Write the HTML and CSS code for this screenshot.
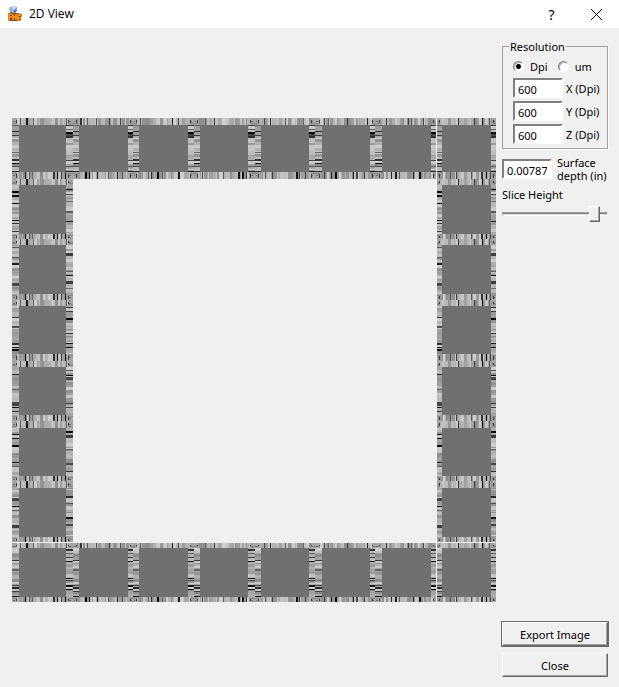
FILE: index.html
```html
<!DOCTYPE html>
<html lang="en">
<head>
<meta charset="utf-8">
<title>2D View</title>
<link rel="stylesheet" href="styles.css">
</head>
<body>
<header class="titlebar">
  <svg class="app-icon" viewBox="0 0 16 16" aria-hidden="true">
    <path d="M3 1l4-1 3 1v3L9 7H4L2 4z" fill="#8fb4e3"/>
    <path d="M5 1l3-1 1 2-3 2z" fill="#cfe2f8"/>
    <path d="M7 4l3-1-1 3-2 1z" fill="#4f78b8"/>
    <path d="M1 7l4-1 1 1h4l5 1v2l-1 1v3l-2 1H2l-1-1z" fill="#8a4a12"/>
    <path d="M2 15V8h3M2 11h3M6 8v6M9 8v6M6 11h3M11 15V9h4M11 12h3" fill="none" stroke="#ff9a1f" stroke-width="1.600"/>
  </svg>
  <h1 class="title">2D View</h1>
  <button class="caption-button" type="button" aria-label="Help">?</button>
  <button class="caption-button" type="button" aria-label="Close window">
    <svg class="cross" viewBox="0 0 11 11"><path d="M0 0l11 11M11 0L0 11" fill="none" stroke="#000"/></svg>
  </button>
</header>
<main class="content">
  <svg id="slice" class="slice" viewBox="0 0 484 484" shape-rendering="crispEdges" role="img" aria-label="Slice"></svg>
  <form class="panel">
    <fieldset class="group">
      <legend>Resolution</legend>
      <div class="units">
        <label><input type="radio" name="unit" checked>Dpi</label>
        <label><input type="radio" name="unit">um</label>
      </div>
      <label class="field"><input type="text" value="600">X (Dpi)</label>
      <label class="field"><input type="text" value="600">Y (Dpi)</label>
      <label class="field"><input type="text" value="600">Z (Dpi)</label>
    </fieldset>
    <label class="field depth"><input type="text" value="0.00787"><span>Surface depth (in)</span></label>
    <label class="slider">Slice Height<input type="range" min="0" max="100" value="92"></label>
    <div class="actions">
      <button class="push default" type="button">Export Image</button>
      <button class="push" type="button">Close</button>
    </div>
  </form>
</main>
<script src="slice.js"></script>
</body>
</html>
```
FILE: styles.css
```css
* { box-sizing: border-box; }
body {
  margin: 0;
  min-height: 100vh;
  display: flex;
  flex-direction: column;
  background: #f0f0f0;
  color: #000;
  font: 11px/13px "Noto Sans", "Open Sans", sans-serif;
}
button, input { font: inherit; color: inherit; }
.titlebar {
  display: flex;
  align-items: center;
  height: 28px;
  padding-left: 7px;
  background: #fff;
}
.app-icon { width: 16px; height: 16px; margin-right: 6px; }
.title { flex: 1; margin: 0; font: 12px/16px "Open Sans", sans-serif; }
.caption-button {
  display: grid;
  place-items: center;
  width: 45px;
  height: 28px;
  padding: 0;
  border: 0;
  background: none;
  font-size: 14px;
}
.cross { width: 11px; height: 11px; }
.content {
  flex: 1;
  display: grid;
  grid-template-columns: 1fr 106px;
  gap: 6px;
  padding: 12px 11px 10px 12px;
}
.slice { width: 100%; margin-top: 78px; }
.panel { display: flex; flex-direction: column; }
.group {
  display: flex;
  flex-direction: column;
  gap: 3px;
  min-width: 0;
  margin: 0;
  padding: 7px 0 4px 10px;
  border: 1px solid #a0a0a0;
  box-shadow: 1px 1px #fff;
}
.group legend { margin-left: -4px; padding: 0 1px; }
.units { display: flex; gap: 10px; margin-bottom: 2px; }
.units label { display: flex; align-items: center; gap: 6px; }
.units input {
  appearance: none;
  width: 11px;
  height: 11px;
  margin: 0;
  border: 1px solid;
  border-color: #808080 #fff #fff #808080;
  border-radius: 50%;
  background: #fff;
  box-shadow: inset 1px 1px #b0b0b0;
}
.units input:checked { background: radial-gradient(circle, #000 2px, #fff 3px); }
.field { display: flex; align-items: center; gap: 3px; white-space: nowrap; }
.field input {
  width: 50px;
  height: 20px;
  padding: 2px 3px 0;
  border: 2px solid;
  border-color: #808080 #fff #fff #808080;
  border-radius: 0;
  background: #fff;
}
.depth { gap: 5px; margin-top: 7px; white-space: normal; }
.slider { display: block; margin-top: 6px; }
.slider input {
  appearance: none;
  display: block;
  width: 100%;
  height: 16px;
  margin: 5px 0 0;
  background: none;
}
.slider input::-webkit-slider-runnable-track {
  height: 4px;
  border: 1px solid;
  border-color: #a0a0a0 #fff #fff #a0a0a0;
  background: linear-gradient(#808080 1px, #e3e3e3 1px);
}
.slider input::-webkit-slider-thumb {
  appearance: none;
  width: 11px;
  height: 16px;
  margin-top: -7px;
  border: 1px solid;
  border-color: #fff #696969 #696969 #fff;
  background: #f0f0f0;
  box-shadow: inset -1px -1px #a0a0a0;
}
.actions { display: flex; flex-direction: column; gap: 7px; margin-top: auto; }
.push {
  height: 24px;
  padding: 0;
  border: 1px solid;
  border-color: #fff #696969 #696969 #fff;
  border-radius: 0;
  background: #f0f0f0;
  box-shadow: inset -1px -1px #a0a0a0;
}
.push.default { outline: 1px solid #696969; }
```
FILE: slice.js
```js
// Draws the frame of tiles; every tile edge is a barcode-like strip of greys.
const svg = document.getElementById("slice");
const starts = [0, 61, 121, 182, 243, 303, 363, 425];
const ends = [61, 121, 182, 243, 303, 363, 424, 484];
const inner = [[7, 54], [67, 116], [127, 176], [188, 236], [249, 297], [310, 358], [370, 419], [430, 479]];

function rect(x, y, w, h, fill) {
  const r = document.createElementNS("http://www.w3.org/2000/svg", "rect");
  Object.entries({ x, y, width: w, height: h, fill }).forEach(([k, v]) => r.setAttribute(k, v));
  svg.append(r);
}
function grey(v) { return `rgb(${v},${v},${v})`; }

// Light bars one to three pixels thick; darks lists [offset, length, grey].
function strip(x, y, w, h, vertical, seed, darks) {
  let s = seed * 7919 + 17;
  const next = () => (s = (s * 1103515245 + 12345) % 2147483648) / 2147483648;
  const n = vertical ? w : h;
  for (let i = 0; i < n;) {
    const len = Math.min(n - i, 1 + Math.floor(next() * 3));
    const v = Math.round(140 + next() * 68);
    vertical ? rect(x + i, y, len, h, grey(v)) : rect(x, y + i, w, len, grey(v));
    i += len;
  }
  darks.forEach(([o, len, v]) => {
    if (o + len <= n) vertical ? rect(x + o, y, len, h, grey(v)) : rect(x, y + o, w, len, grey(v));
  });
}

const topDarks = [
  [[8, 1, 90], [14, 2, 25], [21, 1, 100], [54, 1, 90]],
  [[7, 2, 50], [14, 1, 90], [23, 1, 80], [36, 1, 60], [47, 1, 70]],
  [[7, 1, 90], [39, 1, 10], [45, 1, 70], [59, 1, 40]],
  [[20, 1, 60], [57, 2, 0], [11, 1, 100]],
  [[9, 1, 70], [15, 1, 40], [30, 1, 90], [48, 1, 100]],
  [[9, 1, 70], [13, 1, 100], [32, 1, 50], [52, 1, 40]],
  [[11, 1, 50], [33, 1, 60], [36, 1, 90], [48, 1, 70]],
  [[21, 1, 50], [37, 1, 60], [45, 1, 0], [52, 1, 90]]
];
const bottomDarks = [
  [[13, 1, 20], [17, 1, 90], [20, 1, 100], [41, 2, 50], [45, 1, 0], [49, 1, 60], [53, 1, 10]],
  [[12, 2, 0], [16, 1, 0], [24, 1, 30], [35, 1, 90], [44, 1, 20], [49, 1, 80]],
  [[18, 1, 40], [24, 2, 10], [29, 1, 90], [45, 2, 30], [15, 1, 100]],
  [[8, 1, 70], [29, 1, 90], [44, 2, 20], [48, 2, 10], [52, 1, 60]],
  [[10, 1, 90], [17, 1, 60], [41, 2, 20], [44, 1, 60], [50, 1, 50]],
  [[9, 1, 60], [16, 1, 20], [20, 2, 0], [38, 1, 20], [41, 2, 70], [49, 1, 60]],
  [[16, 1, 40], [20, 2, 30], [24, 1, 90], [38, 1, 40], [44, 2, 20]],
  [[13, 1, 80], [19, 1, 60], [34, 1, 80], [44, 2, 50], [49, 1, 10], [53, 1, 70]]
];
// Offsets below are measured from the top of the grey square.
const leftDarks = [
  [[0, 1, 100], [6, 1, 50], [10, 1, 60], [27, 1, 100], [34, 2, 50], [38, 1, 0], [41, 1, 80], [46, 1, 40]],
  [[6, 2, 0], [10, 2, 20], [18, 1, 0], [35, 1, 20], [38, 1, 50], [46, 1, 60]],
  [[2, 1, 90], [12, 1, 80], [18, 2, 30], [38, 3, 70]],
  [[11, 1, 60], [20, 2, 80], [37, 2, 50], [41, 1, 30], [43, 2, 10]],
  [[7, 1, 40], [22, 1, 100], [35, 4, 70], [40, 1, 20], [44, 1, 60]],
  [[6, 1, 10], [10, 1, 10], [17, 2, 0], [34, 1, 20], [38, 1, 90]],
  [[10, 3, 70], [18, 1, 0], [22, 1, 90], [37, 3, 60]],
  [[12, 1, 50], [21, 2, 100], [37, 1, 70], [39, 2, 40], [43, 1, 60], [48, 1, 20]]
];
const rightDarks = [
  [[0, 1, 60], [4, 1, 100], [7, 2, 0], [9, 2, 70], [11, 2, 50], [35, 1, 70], [41, 1, 90], [46, 1, 30]],
  [[4, 1, 0], [9, 1, 70], [16, 1, 110], [26, 2, 90], [36, 1, 30]],
  [[8, 3, 60], [26, 1, 100], [30, 1, 20], [36, 3, 60], [43, 1, 110]],
  [[1, 1, 50], [5, 1, 60], [12, 2, 10], [27, 1, 50], [37, 1, 20], [41, 1, 0]],
  [[3, 1, 90], [8, 1, 0], [10, 3, 70], [36, 1, 60], [40, 1, 60]],
  [[3, 2, 0], [7, 3, 60], [21, 1, 100], [35, 2, 70], [43, 1, 50]],
  [[8, 2, 40], [15, 1, 80], [29, 2, 20], [36, 2, 70]],
  [[1, 2, 50], [5, 1, 100], [9, 1, 60], [13, 1, 0], [30, 1, 0], [32, 1, 60], [37, 2, 20], [41, 1, 0]]
];

function corner(x, y, w, h, fx, fy) {
  rect(x, y, w, h, grey(165));
  rect(fx ? x : x + w - 1, y + 2, 1, h - 3, grey(60));
  rect(x, fy ? y + 1 : y + h - 2, w, 1, grey(135));
  rect(x + 1, y + 3, Math.max(1, w - 3), 1, grey(110));
}

for (let row = 0; row < 8; row++) {
  for (let col = 0; col < 8; col++) {
    if (row > 0 && row < 7 && col > 0 && col < 7) continue;
    const x = starts[col], y = starts[row], w = ends[col] - x, h = ends[row] - y;
    const [x1, x2] = inner[col], [y1, y2] = inner[row];
    strip(x, y, w, y1 - y, true, col + 1, topDarks[col]);
    strip(x, y2, w, y + h - y2, true, col + 21, bottomDarks[col]);
    strip(x, y1, x1 - x, y2 - y1, false, row + 41, leftDarks[row]);
    strip(x2, y1, x + w - x2, y2 - y1, false, row + 61, rightDarks[row]);
    corner(x, y, x1 - x - 2, y1 - y, false, false);
    corner(x2 + 2, y, x + w - x2 - 2, y1 - y, true, false);
    corner(x, y2, x1 - x - 2, y + h - y2, false, true);
    corner(x2 + 2, y2, x + w - x2 - 2, y + h - y2, true, true);
    rect(x1, y1, x2 - x1, y2 - y1, "#707070");
  }
}
```
